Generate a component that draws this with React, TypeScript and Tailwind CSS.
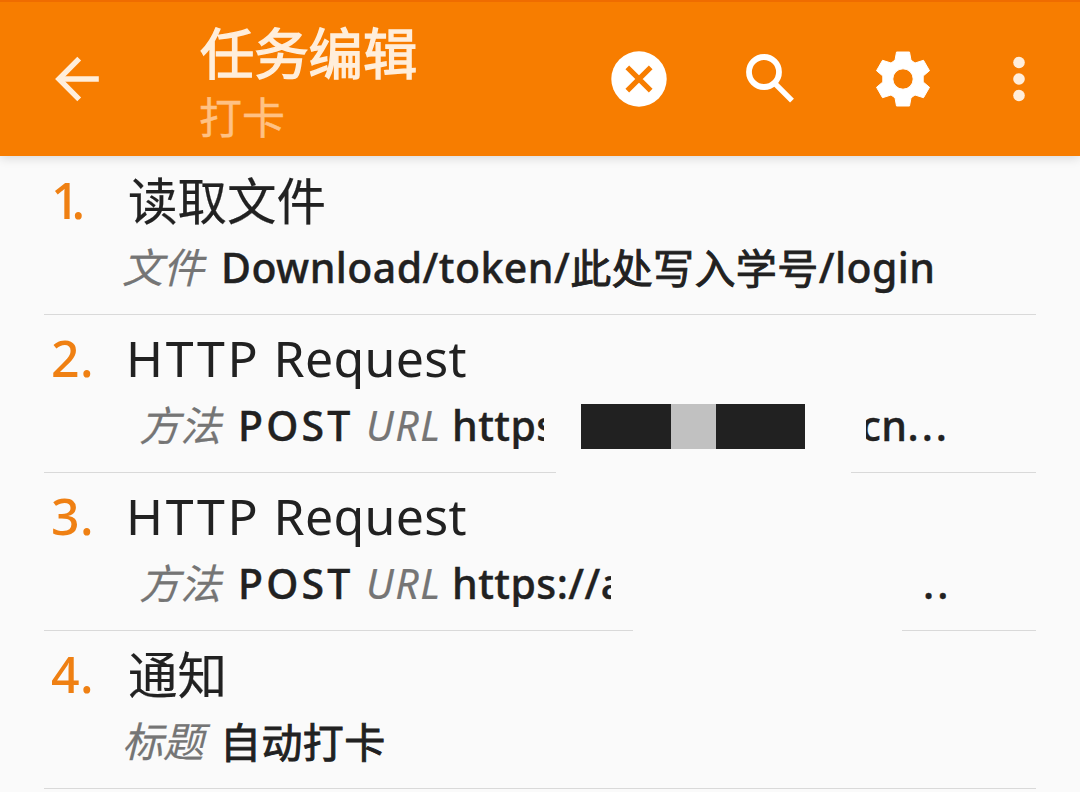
import type { ReactNode } from "react";

const FONT = "font-['Noto_Sans','Noto_Sans_CJK_SC',sans-serif]";

function BackIcon() {
  return (
    <svg viewBox="0 0 46 46" className="h-[46px] w-[46px]" fill="none" stroke="#ffeedb" strokeWidth="5.4">
      <path d="M44.800 23H6" />
      <path d="M25.200 2.700 4.900 23 25.200 43.300" />
    </svg>
  );
}

function CloseCircleIcon() {
  return (
    <svg viewBox="0 0 56 56" className="h-14 w-14">
      <circle cx="28" cy="28" r="27.7" fill="#fff" />
      <path d="M16.3 16.3 39.7 39.7M39.7 16.3 16.3 39.7" stroke="#f77d00" strokeWidth="5.2" />
    </svg>
  );
}

function SearchIcon() {
  return (
    <svg viewBox="0 0 50 50" className="h-[50px] w-[50px]" fill="none" stroke="#fff">
      <circle cx="19" cy="18" r="15" strokeWidth="5.800" />
      <path d="M30.500 30.200 47 46.700" strokeWidth="5.400" />
    </svg>
  );
}

function GearIcon() {
  return (
    <svg viewBox="0 0 56 56" className="h-14 w-14">
      <path
        fill="#fff"
        stroke="#fff"
        strokeWidth="1"
        strokeLinejoin="round"
        fillRule="evenodd"
        d="M21.500 1h13l1.500 8.200 4 2.800 8.500-2.700 6 10.400-6.300 5.300v6l6.300 5.300-6 10.400-8.500-2.700-4 2.800-1.500 8.200h-13L20 46.800 16 44l-8.500 2.700-6-10.400L7.800 31v-6l-6.300-5.300 6-10.400L16 12l4-2.800ZM28 17.800a10.200 10.200 0 1 0 0 20.400 10.200 10.200 0 0 0 0-20.400Z"
      />
    </svg>
  );
}

function MoreIcon() {
  return (
    <svg viewBox="0 0 12 46" className="h-[46px] w-3" fill="#ffeedb">
      <circle cx="6" cy="6.500" r="5.800" />
      <circle cx="6" cy="23" r="5.800" />
      <circle cx="6" cy="39.500" r="5.800" />
    </svg>
  );
}

function Label({ className, children }: { className: string; children: ReactNode }) {
  return (
    <span className={`shrink-0 font-normal italic text-[#757575] [-webkit-text-stroke:0.200px_#757575] ${className}`}>
      {children}
    </span>
  );
}

function Han({ children }: { children: ReactNode }) {
  return (
    <span className="inline-block pt-[2px] font-normal tracking-[0.400px] [-webkit-text-stroke:0.900px_#212121]">
      {children}
    </span>
  );
}

type RowProps = {
  n: number;
  title: ReactNode;
  numberClass?: string;
  titleClass: string;
  rule: ReactNode;
  children: ReactNode;
};

function Row({ n, title, numberClass = "tracking-[0.500px]", titleClass, rule, children }: RowProps) {
  return (
    <li className="flex h-[158px] flex-col px-11">
      <div className="flex h-[86px] items-center whitespace-nowrap leading-none">
        <span className={`w-[82px] shrink-0 pl-[7px] text-[50px] font-medium text-[#ef8013] ${numberClass}`}>{n}.</span>
        <span className={`text-[#212121] ${titleClass}`}>{title}</span>
      </div>
      <div className="flex h-[48px] items-center whitespace-nowrap text-[41px] font-medium leading-[48px] tracking-[0.450px] text-[#212121] [-webkit-text-stroke:0.400px_#212121]">
        {children}
      </div>
      <div className="mt-[23px] flex h-px justify-between">{rule}</div>
    </li>
  );
}

const CJK_TITLE = "pt-[4px] pl-[2px] text-[49.500px] [-webkit-text-stroke:0.200px_#212121]";
const LATIN_TITLE = "text-[50px]";

function HttpTitle() {
  return (
    <>
      <span className="tracking-[2.600px]">HTTP</span>
      <span className="tracking-[0.300px]"> Request</span>
    </>
  );
}

export default function App() {
  return (
    <div className={`h-[792px] w-[1080px] overflow-hidden bg-[#fafafa] ${FONT}`}>
      <header className="relative flex h-[156px] items-center border-t-2 border-[#ef6c00] bg-[#f77d00] shadow-[0_2px_10px_rgba(0,0,0,0.14)]">
        <div className="ml-[54px] w-[145px]">
          <BackIcon />
        </div>
        <div className="flex h-full w-[412px] flex-col whitespace-nowrap">
          <h1 className="mt-[20px] h-[62px] pl-px text-[54.300px] leading-[62px] text-[#ffeedb] [-webkit-text-stroke:1.400px_#ffeedb]">
            任务编辑
          </h1>
          <p className="mt-[9px] h-[50px] text-[43px] leading-[50px] text-[#ffc184] [-webkit-text-stroke:0.400px_#ffc184]">打卡</p>
        </div>
        <CloseCircleIcon />
        <div className="ml-[78px]">
          <SearchIcon />
        </div>
        <div className="ml-[80px]">
          <GearIcon />
        </div>
        <div className="ml-[82px]">
          <MoreIcon />
        </div>
      </header>

      <ol className="pt-px">
        <Row
          n={1}
          title="读取文件"
          numberClass="tracking-[-8px]"
          titleClass={CJK_TITLE}
          rule={<i className="w-full bg-[#d9d9d9]" />}
        >
          <Label className="ml-[78px] w-[99px] tracking-normal">文件</Label>
          <span>Download/token/</span>
          <Han>此处写入学号</Han>
          <span>/login</span>
        </Row>
        <Row
          n={2}
          title={<HttpTitle />}
          titleClass={LATIN_TITLE}
          rule={
            <>
              <i className="w-[512px] bg-[#d9d9d9]" />
              <i className="w-[185px] bg-[#d9d9d9]" />
            </>
          }
        >
          <Label className="ml-[95px] w-[99px] tracking-normal">方法</Label>
          <span className="w-[128px] shrink-0 tracking-[3.200px]">POST</span>
          <Label className="w-[86px] tracking-[1.500px]">URL</Label>
          <span className="w-[92px] shrink-0 overflow-hidden">https</span>
          <span className="ml-[37px] mr-[61px] mt-[2px] flex h-[45px] w-[224px] shrink-0 bg-[#212121]">
            <i className="ml-[90px] w-[45px] bg-[#c1c1c1]" />
          </span>
          <span className="flex w-[84px] shrink-0 justify-end overflow-hidden">
            cn<span className="tracking-[3px]">...</span>
          </span>
        </Row>
        <Row
          n={3}
          title={<HttpTitle />}
          titleClass={LATIN_TITLE}
          rule={
            <>
              <i className="w-[589px] bg-[#d9d9d9]" />
              <i className="w-[134px] bg-[#d9d9d9]" />
            </>
          }
        >
          <Label className="ml-[95px] w-[99px] tracking-normal">方法</Label>
          <span className="w-[128px] shrink-0 tracking-[3.200px]">POST</span>
          <Label className="w-[86px] tracking-[1.500px]">URL</Label>
          <span className="w-[159px] shrink-0 overflow-hidden">https://a</span>
          <span className="ml-[312px] tracking-[3px]">..</span>
        </Row>
        <Row n={4} title="通知" titleClass={CJK_TITLE} rule={<i className="w-full bg-[#d9d9d9]" />}>
          <Label className="ml-[78px] w-[98px] tracking-normal">标题</Label>
          <Han>自动打卡</Han>
        </Row>
      </ol>
    </div>
  );
}
